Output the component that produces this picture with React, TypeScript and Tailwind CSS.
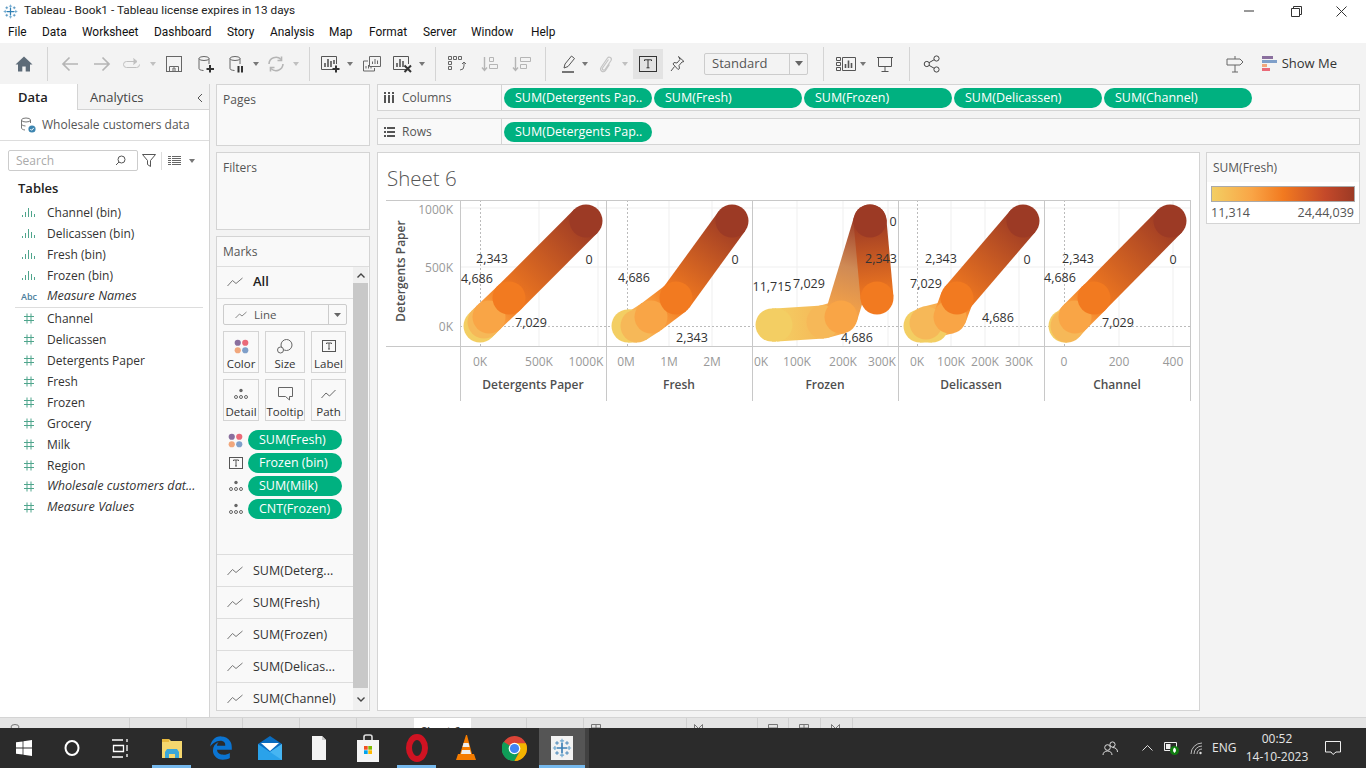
import { FaEdgeLegacy } from 'react-icons/fa6'

type Pt = [number, number, string]

const Y = '#f3ce63'
const Y2 = '#f6b858'
const P = '#f9a546'
const O = '#f27a20'
const D = '#9c3a25'

const PANELS: Pt[][] = [
  [[480, 326, Y], [484, 322, Y2], [489, 317, P], [509, 298, O], [586, 221, D]],
  [[628, 326, Y], [637, 326, Y2], [651, 317, P], [676, 298, O], [732, 221, D]],
  [[772, 325, Y], [776, 325, Y], [823, 322, Y2], [841, 317, P], [870, 221, D]],
  [[920, 326, Y], [932, 326, Y], [926, 323, Y2], [950, 317, P], [957, 298, O], [1023, 221, D]],
  [[1065, 326, Y], [1067, 326, Y2], [1075, 317, P], [1094, 298, O], [1170, 221, D]],
]

const LABELS: [string, number, number][] = [
  ['2,343', 492, 258], ['4,686', 477, 278], ['7,029', 531, 322], ['0', 589, 259],
  ['4,686', 634, 277], ['2,343', 692, 337], ['0', 735, 259],
  ['11,715', 772, 286], ['7,029', 809, 283], ['2,343', 881, 258], ['4,686', 857, 337], ['0', 893, 221],
  ['2,343', 941, 258], ['7,029', 926, 283], ['4,686', 998, 317], ['0', 1027, 259],
  ['2,343', 1078, 258], ['4,686', 1060, 277], ['7,029', 1118, 322], ['0', 1173, 259],
]

const X_TICKS: [string, number][] = [
  ['0K', 480], ['500K', 539], ['1000K', 586],
  ['0M', 626], ['1M', 669], ['2M', 712],
  ['0K', 761], ['100K', 797], ['200K', 843], ['300K', 882],
  ['0K', 917], ['100K', 951], ['200K', 985], ['300K', 1019],
  ['0', 1064], ['200', 1119], ['400', 1173],
]

const X_TITLES: [string, number][] = [
  ['Detergents Paper', 533], ['Fresh', 679], ['Frozen', 825], ['Delicassen', 971], ['Channel', 1117],
]

const MENU = [
  { label: 'File', w: 'w-[34px]' },
  { label: 'Data', w: 'w-[40px]' },
  { label: 'Worksheet', w: 'w-[72px]' },
  { label: 'Dashboard', w: 'w-[73px]' },
  { label: 'Story', w: 'w-[43px]' },
  { label: 'Analysis', w: 'w-[59px]' },
  { label: 'Map', w: 'w-[40px]' },
  { label: 'Format', w: 'w-[54px]' },
  { label: 'Server', w: 'w-[48px]' },
  { label: 'Window', w: 'w-[60px]' },
  { label: 'Help', w: 'w-[40px]' },
]

const BIN_FIELDS = ['Channel (bin)', 'Delicassen (bin)', 'Fresh (bin)', 'Frozen (bin)']
const NUM_FIELDS = ['Channel', 'Delicassen', 'Detergents Paper', 'Fresh', 'Frozen', 'Grocery', 'Milk', 'Region']
const COL_PILLS = ['SUM(Detergents Pap..', 'SUM(Fresh)', 'SUM(Frozen)', 'SUM(Delicassen)', 'SUM(Channel)']
const MARK_ROWS = ['SUM(Deterg...', 'SUM(Fresh)', 'SUM(Frozen)', 'SUM(Delicas...', 'SUM(Channel)']

function Caret({ className, light }: { className: string; light?: boolean }) {
  return (
    <svg width="6" height="4" viewBox="0 0 6 4" className={className}>
      <path d="M0 0h6L3 4z" fill={light ? '#c0c0c0' : '#777'} />
    </svg>
  )
}

function Sep({ className }: { className: string }) {
  return <div className={`w-px h-[34px] bg-[#d4d4d4] ${className}`} />
}

function LineGlyph() {
  return (
    <svg width="16" height="10" viewBox="0 0 16 10" className="shrink-0">
      <path d="M0.5 9 L5.5 3.5 L9 6.5 L15.5 1" fill="none" stroke="#777" strokeWidth="1" />
    </svg>
  )
}

function Snowflake({ size, c1, c2 }: { size: number; c1: string; c2: string }) {
  const arms = (x: number, y: number, r: number, w: number, stroke: string) => (
    <path d={`M${x - r} ${y}H${x + r}M${x} ${y - r}V${y + r}`} stroke={stroke} strokeWidth={w} />
  )
  return (
    <svg width={size} height={size} viewBox="0 0 24 24" fill="none">
      {arms(12, 12, 6, 2, c1)}
      {arms(12, 3.5, 2.5, 1.4, c2)}
      {arms(12, 20.5, 2.5, 1.4, c2)}
      {arms(3.5, 12, 2.5, 1.4, c2)}
      {arms(20.5, 12, 2.5, 1.4, c2)}
      {arms(6, 6, 2.2, 1.1, c1)}
      {arms(18, 6, 2.2, 1.1, c1)}
      {arms(6, 18, 2.2, 1.1, c1)}
      {arms(18, 18, 2.2, 1.1, c1)}
    </svg>
  )
}

function ColorDots({ size }: { size: number }) {
  return (
    <svg width={size} height={size} viewBox="0 0 16 16">
      <circle cx="4" cy="4" r="3.3" fill="#8a6f9e" />
      <circle cx="12" cy="4" r="3.3" fill="#ea6a78" />
      <circle cx="4" cy="12" r="3.3" fill="#f1a77c" />
      <circle cx="12" cy="12" r="3.3" fill="#7f9fc9" />
    </svg>
  )
}

function DetailDots() {
  return (
    <svg width="14" height="12" viewBox="0 0 14 12" fill="none" stroke="#666">
      <circle cx="7" cy="2.5" r="1.7" fill="#666" stroke="none" />
      <circle cx="2" cy="9" r="1.5" />
      <circle cx="7" cy="9" r="1.5" />
      <circle cx="12" cy="9" r="1.5" />
    </svg>
  )
}

function TBox({ size }: { size: number }) {
  return (
    <svg width={size} height={size} viewBox="0 0 14 14" fill="none">
      <rect x="0.5" y="1.5" width="13" height="11" stroke="#555" />
      <path d="M4.5 5V4h5v1M7 4v6M6 10h2" stroke="#555" />
    </svg>
  )
}

function Pill({ text, className }: { text: string; className: string }) {
  return (
    <div className={`h-5 rounded-full bg-[#00b180] text-white text-[12.5px] leading-5 whitespace-nowrap ${className}`}>
      {text}
    </div>
  )
}

function HashIcon() {
  return (
    <svg width="10" height="11" viewBox="0 0 10 11" fill="none" stroke="#4fa58c" strokeWidth="1" className="ml-[24px] mr-[13px] shrink-0">
      <path d="M3 0.5v10M7 0.5v10M0 3.5h10M0 7.5h10" />
    </svg>
  )
}

function BinIcon() {
  return (
    <svg width="15" height="9" viewBox="0 0 15 9" fill="#4fa58c" className="ml-[22px] mr-[10px] shrink-0">
      <rect x="0" y="7" width="1" height="2" />
      <rect x="3" y="4" width="1" height="5" />
      <rect x="6" y="0" width="1" height="9" />
      <rect x="9" y="3" width="1" height="6" />
      <rect x="12" y="6" width="1" height="3" />
    </svg>
  )
}

function Field({ icon, text, italic }: { icon: React.ReactNode; text: string; italic?: boolean }) {
  return (
    <div className={`h-[21px] flex items-center text-[#333] whitespace-nowrap ${italic ? 'italic text-[12.6px]' : 'text-[12px]'}`}>
      {icon}
      {text}
    </div>
  )
}

function MarkButton({ icon, label, className }: { icon: React.ReactNode; label: string; className: string }) {
  return (
    <div className={`h-[42px] border border-[#d4d4d4] flex flex-col items-center justify-between pt-[6px] text-[11.5px] text-[#333] whitespace-nowrap ${className}`}>
      <div className="h-[16px] flex items-center">{icon}</div>
      {label}
    </div>
  )
}

function Chart() {
  return (
    <svg width="806" height="204" viewBox="386 199 806 204" className="block">
      <defs>
        {PANELS.map((pts, p) =>
          pts.slice(1).map((pt, i) => (
            <linearGradient key={`${p}-${i}`} id={`seg-${p}-${i}`} gradientUnits="userSpaceOnUse" x1={pts[i][0]} y1={pts[i][1]} x2={pt[0]} y2={pt[1]}>
              <stop offset="0" stopColor={pts[i][2]} />
              <stop offset="1" stopColor={pt[2]} />
            </linearGradient>
          )),
        )}
        <linearGradient id="seg-wedge" gradientUnits="userSpaceOnUse" x1="841" y1="317" x2="870" y2="221">
          <stop offset="0" stopColor={P} />
          <stop offset="0.5" stopColor="#cf8a55" />
          <stop offset="1" stopColor={D} />
        </linearGradient>
        <linearGradient id="seg-back" gradientUnits="userSpaceOnUse" x1="870" y1="221" x2="877" y2="298">
          <stop offset="0" stopColor={D} />
          <stop offset="1" stopColor={O} />
        </linearGradient>
      </defs>

      {[208, 267].map((y) => <line key={y} x1="460" x2="1190" y1={y} y2={y} stroke="#efefef" />)}
      {[539, 598, 669, 712, 797, 843, 888, 951, 985, 1019, 1119, 1173].map((x) => (
        <line key={x} x1={x} x2={x} y1="200" y2="346" stroke="#efefef" />
      ))}
      <line x1="460" x2="1190" y1="326.5" y2="326.5" stroke="#bbb" strokeDasharray="2 2" />
      {[480, 627, 917, 1064].map((x) => (
        <line key={x} x1={x + 0.5} x2={x + 0.5} y1="200" y2="346" stroke="#bbb" strokeDasharray="2 2" />
      ))}

      <line x1="386" x2="1191" y1="200.5" y2="200.5" stroke="#c8c8c8" />
      <line x1="386" x2="1191" y1="346.5" y2="346.5" stroke="#c8c8c8" />
      {[460, 606, 752, 898, 1044, 1190].map((x) => (
        <line key={x} x1={x + 0.5} x2={x + 0.5} y1="200" y2="401" stroke="#c8c8c8" />
      ))}

      {PANELS.map((pts, p) => (
        <g key={p}>
          {pts.slice(1).map((pt, i) => (
            <line
              key={i}
              x1={pts[i][0]}
              y1={pts[i][1]}
              x2={pt[0]}
              y2={pt[1]}
              stroke={p === 2 && i === 3 ? 'url(#seg-wedge)' : `url(#seg-${p}-${i})`}
              strokeWidth="33"
            />
          ))}
          {pts.map((pt, i) => <circle key={i} cx={pt[0]} cy={pt[1]} r="16.5" fill={pt[2]} />)}
        </g>
      ))}

      {/* frozen panel: the path doubles back over the wedge */}
      <line x1="870" y1="221" x2="877" y2="298" stroke="url(#seg-back)" strokeWidth="33" />
      <circle cx="877" cy="298" r="16.5" fill={O} />
      <circle cx="870" cy="221" r="16.5" fill={D} />

      <g className="text-[12.5px]" fill="#333" textAnchor="middle" dominantBaseline="middle" transform="translate(0 1.5)">
        {LABELS.map(([t, x, y], i) => <text key={i} x={x} y={y}>{t}</text>)}
      </g>
      <g className="text-[12px]" fill="#999" textAnchor="middle" dominantBaseline="middle" transform="translate(0 1)">
        {X_TICKS.map(([t, x], i) => <text key={i} x={x} y="362">{t}</text>)}
      </g>
      <g className="text-[12px]" fill="#999" textAnchor="end" dominantBaseline="middle" transform="translate(0 2)">
        <text x="453" y="209">1000K</text>
        <text x="453" y="267">500K</text>
        <text x="453" y="326">0K</text>
      </g>
      <g className="text-[12px] font-semibold" fill="#4f4f4f" textAnchor="middle" dominantBaseline="middle">
        {X_TITLES.map(([t, x]) => <text key={t} x={x} y="386">{t}</text>)}
        <text x="402" y="271" transform="rotate(-90 402 271)">Detergents Paper</text>
      </g>
    </svg>
  )
}

function Toolbar() {
  return (
    <div className="h-[41px] shrink-0 bg-[#f3f3f3] flex items-center">
      <svg width="18" height="18" viewBox="0 0 18 18" className="ml-[15px]">
        <path d="M9 1.5 L17.5 9.5 H15 V16.5 H10.7 V11.5 H7.3 V16.5 H3 V9.5 H0.5 Z" fill="#5d6b78" />
      </svg>
      <Sep className="ml-[14px]" />
      <svg width="18" height="18" viewBox="0 0 18 18" fill="none" stroke="#b5b5b5" strokeWidth="1.7" className="ml-[13px]">
        <path d="M17 9H2M8.5 2.5L2 9l6.5 6.5" />
      </svg>
      <svg width="18" height="18" viewBox="0 0 18 18" fill="none" stroke="#b5b5b5" strokeWidth="1.7" className="ml-[14px]">
        <path d="M1 9h15M9.5 2.5L16 9l-6.5 6.5" />
      </svg>
      <svg width="20" height="18" viewBox="0 0 20 18" fill="none" stroke="#c0c0c0" className="ml-[11px]">
        <path d="M12 6.5H4.5a3 3 0 000 6h10a3 3 0 003-3" />
        <path d="M11.5 3.5l3.5 3-3.5 3" fill="#c0c0c0" />
      </svg>
      <Caret light className="ml-[8px]" />
      <svg width="18" height="18" viewBox="0 0 18 18" fill="none" stroke="#666" className="ml-[9px]">
        <rect x="1.5" y="1.5" width="15" height="15" />
        <path d="M4.5 16.5v-5h9v5M8 13h2v3.5H8z" />
      </svg>
      <svg width="18" height="18" viewBox="0 0 18 18" fill="none" stroke="#666" className="ml-[14px]">
        <ellipse cx="7" cy="3.5" rx="5" ry="2" />
        <path d="M2 3.5v10c0 1 1.5 1.8 4.5 2M12 3.5V9" />
        <path d="M13 10v7.5M9.5 14H17" stroke="#333" strokeWidth="2" />
      </svg>
      <svg width="18" height="18" viewBox="0 0 18 18" fill="none" stroke="#666" className="ml-[13px]">
        <ellipse cx="7" cy="3.5" rx="5" ry="2" />
        <path d="M2 3.5v10c0 1 1.5 1.8 4.5 2M12 3.5V9" />
        <path d="M10.5 11v6.5M14 11v6.5" stroke="#333" strokeWidth="2" />
      </svg>
      <Caret className="ml-[7px]" />
      <svg width="18" height="18" viewBox="0 0 18 18" fill="none" stroke="#b5b5b5" strokeWidth="1.6" className="ml-[8px]">
        <path d="M2 9a7 7 0 0112-4.5M16 9a7 7 0 01-12 4.5" />
        <path d="M14.5 1.5v4h-4M3.5 16.5v-4h4" />
      </svg>
      <Caret light className="ml-[8px]" />
      <Sep className="ml-[10px]" />
      <svg width="22" height="18" viewBox="0 0 22 18" fill="none" stroke="#555" className="ml-[10px]">
        <path d="M15 14.5H1.5V1.5h15V9" />
        <path d="M5 12V8M8 12V4M11 12V6M14 9V5" strokeWidth="1.6" />
        <path d="M16 10.5v7M12.5 14h7" stroke="#333" strokeWidth="2" />
      </svg>
      <Caret className="ml-[5px]" />
      <svg width="20" height="18" viewBox="0 0 20 18" fill="none" stroke="#666" className="ml-[9px]">
        <path d="M7.5 1.5h11v10h-11zM10.5 9V6.5M13 9V4M15.5 9V5.5" />
        <path d="M6 6H1.5v10h11v-3M4 13.5V11M6.5 13.5V10M9 13.5V11" />
      </svg>
      <svg width="22" height="18" viewBox="0 0 22 18" fill="none" stroke="#555" className="ml-[10px]">
        <path d="M15 14.5H1.5V1.5h15V9" />
        <path d="M5 12V8M8 12V4M11 12V6" strokeWidth="1.6" />
        <path d="M12.5 10.5l6.5 6.5M19 10.5L12.5 17" stroke="#333" strokeWidth="2" />
      </svg>
      <Caret className="ml-[5px]" />
      <Sep className="ml-[10px]" />
      <svg width="20" height="18" viewBox="0 0 20 18" fill="none" stroke="#666" className="ml-[11px]">
        <path d="M1.5 1.5h3v3h-3zM6.5 1.5h3v3h-3zM11.5 1.5h3v3h-3zM1.5 6.5h3v3h-3zM1.5 11.5h3v3h-3z" />
        <path d="M13 15a4 4 0 004-4V7M15 9l2-2 2 2" />
      </svg>
      <svg width="18" height="18" viewBox="0 0 18 18" fill="none" stroke="#b5b5b5" className="ml-[14px]">
        <path d="M3.5 2v13M1 12.5l2.5 3 2.5-3" strokeWidth="1.4" />
        <path d="M8.5 2.5h4v4h-4zM8.5 9.5h8v4h-8z" />
      </svg>
      <svg width="20" height="18" viewBox="0 0 20 18" fill="none" stroke="#b5b5b5" className="ml-[13px]">
        <path d="M3.5 2v13M1 12.5l2.5 3 2.5-3" strokeWidth="1.4" />
        <path d="M8.5 2.5h10v4h-10zM8.5 9.5h6v4h-6z" />
      </svg>
      <Sep className="ml-[13px]" />
      <svg width="18" height="18" viewBox="0 0 18 18" fill="none" stroke="#555" className="ml-[13px]">
        <path d="M5 13l1-4 6.5-8 3 2.5-6.5 8z" />
        <path d="M3 17h12" strokeWidth="1.6" />
      </svg>
      <Caret className="ml-[5px]" />
      <svg width="18" height="18" viewBox="0 0 18 18" fill="none" stroke="#c4c4c4" strokeWidth="1.2" className="ml-[8px]">
        <path d="M12.5 4.5l-6 8.5c-1 1.5 1.5 3 2.5 1.5l6-9c1.5-2.5-2-4.5-3.5-2.5l-6.5 9.5c-2 3 2.5 6 4.5 3l4-6" />
      </svg>
      <Caret light className="ml-[8px]" />
      <div className="w-[30px] h-[30px] ml-[5px] bg-[#e3e3e3] flex items-center justify-center">
        <svg width="18" height="16" viewBox="0 0 18 16" fill="none" stroke="#333">
          <rect x="0.5" y="0.5" width="17" height="15" />
          <path d="M5.5 5V3.8h7V5M9 3.8v8M7.5 11.8h3" />
        </svg>
      </div>
      <svg width="18" height="18" viewBox="0 0 18 18" fill="none" stroke="#555" className="ml-[5px]">
        <path d="M10.5 1.5l5.5 5-2 .5-3 3.5.5 3-1.5 1L5 9l1-1.5 3 .5 3-3.5z" />
        <path d="M6.5 11.5L3 16" />
      </svg>
      <div className="w-[104px] h-[22px] ml-[18px] border border-[#ccc] rounded-[2px] flex items-center bg-[#f3f3f3]">
        <div className="flex-1 pl-[7px] text-[13px] text-[#555]">Standard</div>
        <div className="w-[18px] h-full border-l border-[#ccc] flex items-center justify-center">
          <svg width="8" height="5" viewBox="0 0 8 5"><path d="M0 0h8L4 5z" fill="#666" /></svg>
        </div>
      </div>
      <Sep className="ml-[15px]" />
      <svg width="22" height="18" viewBox="0 0 22 18" fill="none" stroke="#555" className="ml-[11px]">
        <path d="M1.5 2.5h4v3h-4zM1.5 7.5h4v3h-4zM1.5 12.5h4v3h-4zM7.5 2.5h13v13h-13z" />
        <path d="M10.5 13V9M13.5 13V5.5M16.5 13V8" strokeWidth="1.6" />
      </svg>
      <Caret className="ml-[3px]" />
      <svg width="18" height="18" viewBox="0 0 18 18" fill="none" stroke="#555" className="ml-[10px]">
        <path d="M1 2.5h16M2.5 2.5v9h13v-9M9 11.5V16M5.5 16.5h7" />
      </svg>
      <Sep className="ml-[15px]" />
      <svg width="18" height="18" viewBox="0 0 18 18" fill="none" stroke="#444" className="ml-[13px]">
        <circle cx="3.8" cy="9" r="2.6" />
        <circle cx="13.5" cy="3.5" r="2.6" />
        <circle cx="13.5" cy="14.5" r="2.6" />
        <path d="M6 7.7l5.2-3M6 10.3l5.2 3" />
      </svg>
      <svg width="18" height="18" viewBox="0 0 18 18" fill="none" stroke="#666" className="ml-auto">
        <path d="M1 4h13l3 3-3 3H1zM9 1v3M9 10v7M6 17h6" />
      </svg>
      <svg width="15" height="15" viewBox="0 0 15 15" className="ml-[18px]">
        <rect x="0" y="0" width="11" height="3" fill="#8a6f9e" />
        <rect x="0" y="4" width="15" height="3" fill="#7f9fc9" />
        <rect x="0" y="8" width="5" height="3" fill="#f1a77c" />
        <rect x="0" y="12" width="8" height="3" fill="#ea6a78" />
      </svg>
      <span className="ml-[5px] mr-[29px] text-[13px] text-[#333]">Show Me</span>
    </div>
  )
}

function Sidebar() {
  return (
    <div className="w-[210px] shrink-0 bg-white border-r border-[#d4d4d4] flex flex-col">
      <div className="h-[26px] flex shrink-0">
        <div className="w-[77px] pl-[18px] leading-[26px] text-[13px] font-semibold text-[#222]">Data</div>
        <div className="flex-1 bg-[#f3f3f3] border-l border-b border-[#d4d4d4] pl-[12px] pr-[6px] pt-[2px] flex items-center justify-between text-[13px] text-[#444]">
          Analytics
          <svg width="6" height="10" viewBox="0 0 6 10" fill="none" stroke="#555"><path d="M5 1L1 5l4 4" /></svg>
        </div>
      </div>
      <div className="h-[31px] shrink-0 border-b border-[#ddd] flex items-center pl-[20px] text-[12px] text-[#555] whitespace-nowrap">
        <svg width="16" height="16" viewBox="0 0 16 16" fill="none" stroke="#777" className="mr-[6px]">
          <ellipse cx="6" cy="3" rx="4.5" ry="2" />
          <path d="M1.5 3v8c0 1 1.5 1.8 3.5 2M10.5 3v3M1.5 7c0 1 1.5 1.8 4 2" />
          <circle cx="12" cy="12" r="3.6" fill="#3d85b0" stroke="none" />
          <path d="M10.3 12l1.3 1.3 2.2-2.4" stroke="#fff" />
        </svg>
        Wholesale customers data
      </div>
      <div className="h-[21px] mt-[9px] shrink-0 flex items-center pl-[8px]">
        <div className="w-[130px] h-[21px] border border-[#ccc] rounded-[2px] flex items-center justify-between pl-[7px] pr-[11px] text-[12px] text-[#aaa]">
          Search
          <svg width="11" height="11" viewBox="0 0 11 11" fill="none" stroke="#555">
            <circle cx="6.5" cy="4.5" r="3.5" />
            <path d="M4 7L1 10" />
          </svg>
        </div>
        <svg width="14" height="13" viewBox="0 0 14 13" fill="none" stroke="#555" className="ml-[4px]">
          <path d="M0.5 0.5h13L8.5 6.5V12.5L5.5 10.5V6.5z" />
        </svg>
        <div className="w-px h-[18px] bg-[#ddd] ml-[5px]" />
        <svg width="13" height="9" viewBox="0 0 13 9" fill="#666" className="ml-[6px]">
          <path d="M0 0h3v1H0zM4 0h9v1H4zM0 2h3v1H0zM4 2h9v1H4zM0 4h3v1H0zM4 4h9v1H4zM0 6h3v1H0zM4 6h9v1H4zM0 8h3v1H0zM4 8h9v1H4z" />
        </svg>
        <Caret className="ml-[8px]" />
      </div>
      <div className="h-[26px] mt-[5px] shrink-0 pl-[18px] leading-[24px] text-[13px] font-semibold text-[#222]">Tables</div>
      <div className="flex flex-col">
        {BIN_FIELDS.map((f) => <Field key={f} icon={<BinIcon />} text={f} />)}
        <Field
          italic
          icon={<span className="ml-[21px] mr-[10px] w-[16px] shrink-0 text-[9px] not-italic font-semibold text-[#4a7d9c]">Abc</span>}
          text="Measure Names"
        />
        <div className="h-px bg-[#ddd] ml-[15px] mr-[6px]" />
        {NUM_FIELDS.map((f) => <Field key={f} icon={<HashIcon />} text={f} />)}
        <Field italic icon={<HashIcon />} text="Wholesale customers dat..." />
        <Field italic icon={<HashIcon />} text="Measure Values" />
      </div>
    </div>
  )
}

function MarksCard() {
  return (
    <div className="h-[475px] border border-[#d4d4d4] bg-[#f9f9f9] flex flex-col shrink-0">
      <div className="h-[29px] shrink-0 pl-[6px] leading-[30px] text-[12px] text-[#555]">Marks</div>
      <div className="flex-1 min-h-0 flex border-t border-[#ddd]">
        <div className="w-[136px] overflow-hidden">
          <div className="h-[32px] pb-[1px] border-b border-[#ddd] flex items-center pl-[10px] text-[13px] font-semibold text-[#222]">
            <LineGlyph />
            <span className="ml-[10px]">All</span>
          </div>
          <div className="h-[256px] border-b border-[#ddd] px-[6px] pt-[5px]">
            <div className="h-[21px] border border-[#ccc] rounded-[2px] flex items-center text-[11.5px] text-[#555]">
              <div className="flex-1 flex items-center pl-[11px] gap-[7px]">
                <svg width="12" height="8" viewBox="0 0 12 8" fill="none" stroke="#888"><path d="M0.5 7l4-4 2.5 2L11.5 1" /></svg>
                Line
              </div>
              <div className="w-[18px] h-full border-l border-[#ccc] flex items-center justify-center">
                <svg width="7" height="4" viewBox="0 0 7 4"><path d="M0 0h7L3.5 4z" fill="#666" /></svg>
              </div>
            </div>
            <div className="flex mt-[6px]">
              <MarkButton className="w-[36px]" label="Color" icon={<ColorDots size={15} />} />
              <MarkButton
                className="w-[40px] ml-[6px]"
                label="Size"
                icon={
                  <svg width="16" height="15" viewBox="0 0 16 15" fill="none" stroke="#666">
                    <circle cx="9.5" cy="6" r="5.5" />
                    <circle cx="3.5" cy="11" r="3" fill="#f9f9f9" />
                  </svg>
                }
              />
              <MarkButton className="w-[35px] ml-[6px]" label="Label" icon={<TBox size={14} />} />
            </div>
            <div className="flex mt-[6px]">
              <MarkButton className="w-[36px]" label="Detail" icon={<DetailDots />} />
              <MarkButton
                className="w-[40px] ml-[6px]"
                label="Tooltip"
                icon={
                  <svg width="15" height="14" viewBox="0 0 15 14" fill="none" stroke="#666">
                    <path d="M0.5 0.5h14v9h-3V13l-4-3.5H0.5z" />
                  </svg>
                }
              />
              <MarkButton
                className="w-[35px] ml-[6px]"
                label="Path"
                icon={
                  <svg width="15" height="10" viewBox="0 0 15 10" fill="none" stroke="#666">
                    <path d="M0.5 9L5 4l3.5 3L14.5 1" />
                  </svg>
                }
              />
            </div>
            <div className="mt-[9px] flex flex-col gap-[3px]">
              <div className="flex items-center">
                <div className="w-[25px] flex justify-center"><ColorDots size={15} /></div>
                <Pill text="SUM(Fresh)" className="w-[94px] pl-[11px]" />
              </div>
              <div className="flex items-center">
                <div className="w-[25px] flex justify-center"><TBox size={14} /></div>
                <Pill text="Frozen (bin)" className="w-[94px] pl-[11px]" />
              </div>
              <div className="flex items-center">
                <div className="w-[25px] flex justify-center"><DetailDots /></div>
                <Pill text="SUM(Milk)" className="w-[94px] pl-[11px]" />
              </div>
              <div className="flex items-center">
                <div className="w-[25px] flex justify-center"><DetailDots /></div>
                <Pill text="CNT(Frozen)" className="w-[94px] pl-[11px]" />
              </div>
            </div>
          </div>
          {MARK_ROWS.map((r) => (
            <div key={r} className="h-[32px] pt-[1px] border-b border-[#ddd] flex items-center pl-[10px] text-[12.5px] text-[#333] whitespace-nowrap">
              <LineGlyph />
              <span className="ml-[10px]">{r}</span>
            </div>
          ))}
        </div>
        <div className="w-[15px] flex flex-col bg-[#f0f0f0]">
          <div className="h-[16px] flex items-center justify-center">
            <svg width="8" height="5" viewBox="0 0 8 5" fill="none" stroke="#444" strokeWidth="1.4"><path d="M0.5 4.5L4 1l3.5 3.5" /></svg>
          </div>
          <div className="flex-1 bg-[#c8c8c8]" />
          <div className="h-[22px] flex items-center justify-center">
            <svg width="8" height="5" viewBox="0 0 8 5" fill="none" stroke="#444" strokeWidth="1.4"><path d="M0.5 0.5L4 4l3.5-3.5" /></svg>
          </div>
        </div>
      </div>
    </div>
  )
}

function Shelf({ label, icon, children }: { label: string; icon: React.ReactNode; children: React.ReactNode }) {
  return (
    <div className="h-[27px] shrink-0 border border-[#d4d4d4] bg-[#f9f9f9] flex">
      <div className="w-[124px] shrink-0 border-r border-[#d4d4d4] flex items-center pl-[6px] text-[12px] text-[#555]">
        <div className="w-[18px]">{icon}</div>
        {label}
      </div>
      <div className="flex items-center pl-[2px] gap-[2px]">{children}</div>
    </div>
  )
}

function TabStrip() {
  return (
    <div className="h-[11px] shrink-0 bg-[#e4e4e4] border-t border-[#d4d4d4] flex overflow-hidden text-[12px] text-[#444]">
      <div className="w-[130px] border-r border-[#d0d0d0] pl-[9px]">
        <svg width="12" height="12" viewBox="0 0 12 12" fill="none" stroke="#777" className="mt-[5px]"><ellipse cx="6" cy="4" rx="4" ry="2.5" /></svg>
      </div>
      <div className="w-[57px] border-r border-[#d0d0d0]" />
      <div className="w-[56px] border-r border-[#d0d0d0]" />
      <div className="w-[57px] border-r border-[#d0d0d0]" />
      <div className="w-[57px] border-r border-[#d0d0d0]" />
      <div className="w-[57px]" />
      <div className="w-[57px] bg-white pl-[7px] pt-[5px] font-semibold text-[11px] whitespace-nowrap">Sheet 6</div>
      <div className="w-[56px] border-r border-[#d0d0d0]" />
      <div className="w-[57px] border-r border-[#d0d0d0]" />
      <div className="w-[103px] border-r border-[#d0d0d0] pl-[7px]">
        <svg width="10" height="10" viewBox="0 0 10 10" fill="none" stroke="#777" className="mt-[6px]"><path d="M0.5 0.5h9v9h-9zM0.5 4h9M5 0.5v9" /></svg>
      </div>
      <div className="w-[71px] border-r border-[#d0d0d0] pl-[7px]">
        <svg width="10" height="10" viewBox="0 0 10 10" fill="none" stroke="#777" className="mt-[6px]"><path d="M0.5 9V0.5l4 4 4-4V9" /></svg>
      </div>
      <div className="w-[31px] border-r border-[#d0d0d0] pl-[10px]">
        <svg width="10" height="10" viewBox="0 0 10 10" fill="none" stroke="#777" className="mt-[6px]"><path d="M0.5 0.5h9v9h-9zM0.5 4h9" /></svg>
      </div>
      <div className="w-[32px] border-r border-[#d0d0d0] pl-[10px]">
        <svg width="10" height="10" viewBox="0 0 10 10" fill="none" stroke="#777" className="mt-[6px]"><path d="M0.5 0.5h9v9h-9zM0.5 4h9M5 0.5v9" /></svg>
      </div>
      <div className="w-[32px] border-r border-[#d0d0d0] pl-[10px]">
        <svg width="10" height="10" viewBox="0 0 10 10" fill="none" stroke="#777" className="mt-[6px]"><path d="M0.5 9V0.5l4 4 4-4V9" /></svg>
      </div>
    </div>
  )
}

function TaskCell({ children, open }: { children: React.ReactNode; open?: boolean }) {
  return (
    <div className="w-[49px] h-full flex items-center justify-center relative">
      {children}
      {open && <div className="absolute bottom-0 left-[5px] right-[5px] h-[3px] bg-[#76b9ed]" />}
    </div>
  )
}

function Taskbar() {
  return (
    <div className="h-[40px] shrink-0 bg-[#2b2b2b] flex items-center text-white">
      <div className="w-[48px] flex justify-center">
        <svg width="16" height="16" viewBox="0 0 16 16" fill="#fff">
          <path d="M0 2.3l6.6-.9v6.2H0zM7.4 1.3L16 0v7.6H7.4zM0 8.4h6.6v6.2L0 13.7zM7.4 8.4H16V16l-8.6-1.3z" />
        </svg>
      </div>
      <div className="w-[48px] flex justify-center">
        <svg width="16" height="16" viewBox="0 0 16 16" fill="none" stroke="#fff" strokeWidth="2"><ellipse cx="8" cy="8" rx="6.5" ry="7" /></svg>
      </div>
      <div className="w-[48px] flex justify-center">
        <svg width="17" height="19" viewBox="0 0 17 19" fill="none" stroke="#fff" strokeWidth="1.3">
          <path d="M0 1h11M1.5 6.5h10v6h-10zM0 18h11M15 0v3M15 6v6M15 15v3" />
        </svg>
      </div>
      <div className="w-[3px]" />
      <TaskCell open>
        <svg width="22" height="22" viewBox="0 0 22 22">
          <path d="M1 2h7l2 2h11v17H1z" fill="#f5d76e" />
          <path d="M1 2h7v3H1z" fill="#e8b93e" />
          <path d="M6 12h10l2 3v6h-4v-4H8v4H4v-6z" fill="#3ba7d9" />
        </svg>
      </TaskCell>
      <TaskCell>
        <FaEdgeLegacy size={24} color="#0b74d1" />
      </TaskCell>
      <TaskCell>
        <svg width="24" height="24" viewBox="0 0 24 24">
          <path d="M12 0l12 8v16H0V8z" fill="#0a6cbf" />
          <path d="M0 8l12 8 12-8v16H0z" fill="#2aa2ea" />
          <path d="M3 7h18l-9 8z" fill="#fff" />
          <path d="M0 8l12 8 12-8v16z" fill="#46b5f2" />
        </svg>
      </TaskCell>
      <TaskCell>
        <svg width="16" height="24" viewBox="0 0 16 24">
          <path d="M1 0h10l4 4v20H1z" fill="#f3f3f3" />
          <path d="M11 0l4 4h-4z" fill="#c8c8c8" />
        </svg>
      </TaskCell>
      <TaskCell>
        <svg width="24" height="28" viewBox="0 0 24 28">
          <path d="M8 7V3a2 2 0 012-2h4a2 2 0 012 2v4" fill="none" stroke="#ddd" strokeWidth="1.6" />
          <path d="M1 6h22v22H1z" fill="#f5f5f5" />
          <path d="M8 12h3.7v3.7H8z" fill="#f25022" />
          <path d="M12.3 12H16v3.7h-3.7z" fill="#7fba00" />
          <path d="M8 16.3h3.7V20H8z" fill="#00a4ef" />
          <path d="M12.3 16.3H16V20h-3.7z" fill="#ffb900" />
        </svg>
      </TaskCell>
      <TaskCell open>
        <svg width="24" height="28" viewBox="0 0 24 28" fill="none">
          <ellipse cx="12" cy="14" rx="8" ry="11" stroke="#cf1322" strokeWidth="6" />
        </svg>
      </TaskCell>
      <TaskCell>
        <svg width="20" height="28" viewBox="0 0 20 28">
          <path d="M10 1h1l5 19h2l2 6H0l2-6h2z" fill="#f57c00" />
          <path d="M7.5 9h5l1 4h-7zM6 16h8l1 4H5z" fill="#eee" />
        </svg>
      </TaskCell>
      <TaskCell>
        <svg width="25" height="25" viewBox="0 0 24 24">
          <circle cx="12" cy="12" r="12" fill="#db4437" />
          <path d="M12 12L1.5 5.5A12 12 0 0012 24l6-12z" fill="#0f9d58" />
          <path d="M12 7h10.9A12 12 0 0112 24l5-9z" fill="#f4b400" />
          <circle cx="12" cy="12" r="5.6" fill="#fff" />
          <circle cx="12" cy="12" r="4.4" fill="#4285f4" />
        </svg>
      </TaskCell>
      <div className="w-[46px] h-full bg-[#555] flex items-center justify-center relative">
        <div className="w-[22px] h-[24px] bg-[#f2f2f2] flex items-center justify-center">
          <Snowflake size={20} c1="#3b7fb5" c2="#6fa8d0" />
        </div>
        <div className="absolute bottom-0 inset-x-0 h-[3px] bg-[#76b9ed]" />
      </div>
      <div className="w-[4px] h-full bg-[#414141]" />

      <svg width="16" height="16" viewBox="0 0 16 16" fill="none" stroke="#ddd" className="ml-auto">
        <circle cx="10.5" cy="4.5" r="2.6" />
        <path d="M15.5 12c0-3-2-4.5-5-4.5" />
        <circle cx="5.5" cy="7.5" r="2.8" />
        <path d="M1 15c0-2.5 2-4 4.5-4s4.5 1.5 4.5 4" />
      </svg>
      <svg width="11" height="6" viewBox="0 0 11 6" fill="none" stroke="#ddd" className="ml-[24px]"><path d="M0.5 5.5L5.500 0.500l5 5" /></svg>
      <svg width="15" height="14" viewBox="0 0 15 14" className="ml-[11px]">
        <path d="M0.5 1.5h12v8h-12z" fill="none" stroke="#eee" />
        <path d="M2 3h4.5v5H2z" fill="#eee" />
        <circle cx="10.5" cy="9.5" r="4.5" fill="#107c10" />
        <path d="M10.5 6.5c2 1.5 2 4 0 5.5-2-1.5-2-4 0-5.500z" fill="#fff" />
      </svg>
      <svg width="13" height="13" viewBox="0 0 13 13" fill="none" stroke="#bbb" className="ml-[11px]">
        <path d="M1 12a11 11 0 0111-11M4 12a8 8 0 018-8M7 12a5 5 0 015-5" />
        <circle cx="10.5" cy="11" r="1.2" fill="#ddd" stroke="none" />
      </svg>
      <span className="ml-[9px] text-[12px] text-[#e6e6e6] w-[24px]">ENG</span>
      <div className="ml-[12px] w-[58px] flex flex-col items-center text-[12px] leading-[18px] text-[#e6e6e6]">
        <span>00:52</span>
        <span className="whitespace-nowrap">14-10-2023</span>
      </div>
      <svg width="16" height="16" viewBox="0 0 16 16" fill="none" stroke="#eee" className="ml-[19px] mr-[25px]">
        <path d="M0.5 1.5h15v10.500h-4.500L8 14.500 6 12H0.5z" />
      </svg>
    </div>
  )
}

export default function App() {
  return (
    <div className="w-[1366px] h-[768px] overflow-hidden flex flex-col bg-white font-['Open_Sans',sans-serif]">
      <div className="h-[22px] shrink-0 flex items-center pl-[3px] font-['Roboto',sans-serif] text-[11.8px] text-[#222]">
        <Snowflake size={15} c1="#2f7fb3" c2="#6aa7cf" />
        <span className="ml-[6px]">Tableau - Book1 - Tableau license expires in 13 days</span>
        <svg width="12" height="2" viewBox="0 0 12 2" className="ml-auto"><path d="M0 1h10" stroke="#333" /></svg>
        <svg width="11" height="11" viewBox="0 0 11 11" fill="none" stroke="#333" className="ml-[35px]">
          <path d="M0.5 2.5h8v8h-8zM2.5 2.5v-2h8v8h-2" />
        </svg>
        <svg width="11" height="11" viewBox="0 0 11 11" fill="none" stroke="#333" className="ml-[34px] mr-[19px]">
          <path d="M0.5 0.5l10 10M10.5 0.5l-10 10" />
        </svg>
      </div>
      <div className="h-[21px] shrink-0 flex items-center pl-[8px] font-['Roboto',sans-serif] text-[11.9px] text-[#111]">
        {MENU.map((m) => <div key={m.label} className={m.w}>{m.label}</div>)}
      </div>
      <Toolbar />
      <div className="h-[633px] shrink-0 bg-[#f3f3f3] flex">
        <Sidebar />
        <div className="w-[154px] ml-[6px] pb-[6px] shrink-0 flex flex-col gap-[6px]">
          <div className="h-[62px] border border-[#d4d4d4] bg-[#f9f9f9] pl-[6px] pt-[6px] text-[12px] text-[#555]">Pages</div>
          <div className="h-[78px] border border-[#d4d4d4] bg-[#f9f9f9] pl-[6px] pt-[6px] text-[12px] text-[#555]">Filters</div>
          <MarksCard />
        </div>
        <div className="w-[983px] ml-[7px] pb-[6px] shrink-0 flex flex-col gap-[7px]">
          <Shelf
            label="Columns"
            icon={
              <svg width="10" height="11" viewBox="0 0 10 11" fill="#555">
                <path d="M0 3h2v8H0zM4 3h2v8H4zM8 3h2v8H8zM0 0h2v2H0zM4 0h2v2H4zM8 0h2v2H8z" />
              </svg>
            }
          >
            {COL_PILLS.map((p, i) => <Pill key={i} text={p} className="w-[148px] pl-[11px]" />)}
          </Shelf>
          <Shelf
            label="Rows"
            icon={
              <svg width="11" height="10" viewBox="0 0 11 10" fill="#555">
                <path d="M0 0h2v2H0zM3 0h8v2H3zM0 4h2v2H0zM3 4h8v2H3zM0 8h2v2H0zM3 8h8v2H3z" />
              </svg>
            }
          >
            <Pill text="SUM(Detergents Pap.." className="w-[148px] pl-[11px]" />
          </Shelf>
          <div className="flex-1 flex gap-[6px] min-h-0">
            <div className="w-[823px] shrink-0 bg-white border border-[#d4d4d4] pl-[8px]">
              <div className="h-[46px] pl-[1px] pt-[11px] text-[20.5px] leading-[28px] font-light text-[#555]">Sheet 6</div>
              <Chart />
            </div>
            <div className="w-[154px] h-[72px] shrink-0 border border-[#d4d4d4] bg-white flex flex-col">
              <div className="h-[29px] shrink-0 bg-[#f9f9f9] pl-[6px] leading-[30px] text-[12px] text-[#555]">SUM(Fresh)</div>
              <div className="mx-[4px] mt-[4px] h-[16px] shrink-0 border border-[#aaa] bg-[linear-gradient(to_right,#f3ce63,#f9a546_28%,#f27a20_50%,#c4492a_80%,#9c3a25)]" />
              <div className="ml-[4px] mr-[5px] mt-[2px] flex justify-between text-[12.5px] leading-[17px] text-[#555]">
                <span>11,314</span>
                <span>24,44,039</span>
              </div>
            </div>
          </div>
        </div>
      </div>
      <TabStrip />
      <Taskbar />
    </div>
  )
}
